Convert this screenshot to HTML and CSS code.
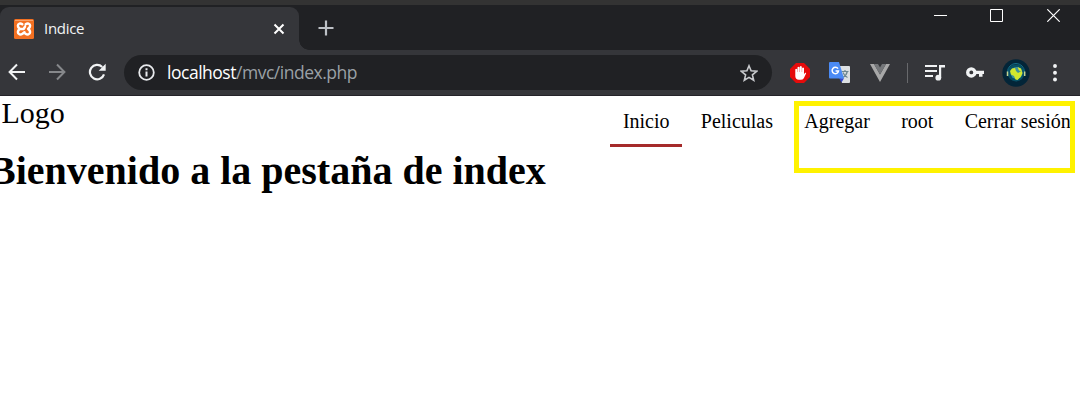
FILE: index.html
```html
<!DOCTYPE html>
<html lang="es">
<head>
<meta charset="utf-8">
<title>Indice</title>
<link rel="stylesheet" href="styles.css">
</head>
<body>
<header class="browser">
  <div class="tabstrip">
    <div class="tab">
      <svg class="favicon" width="20" height="20" viewBox="0 0 20 20"><rect width="20" height="20" rx="1.5" fill="#f37021"/><path d="M1 1.500h18" stroke="#f9a36b"/><path d="M8.300 5.300C6.500 4 3.900 4.300 3.900 6.800c0 1.700.8 2.400 2 3.100-1.200.8-2 1.600-2 3.200 0 2.700 2.800 2.900 4.600 1.600l2-1.500M11.700 5.300c1.800-1.300 4.400-1 4.400 1.500 0 1.700-.8 2.400-2 3.100 1.200.8 2 1.600 2 3.200 0 2.700-2.800 2.900-4.600 1.600M6.500 9.900h3.200l1.300-2.300" fill="none" stroke="#fff" stroke-width="2.500" stroke-linejoin="round" stroke-linecap="round"/></svg>
      <span class="tab-title">Indice</span>
      <svg class="tab-close" width="12" height="12" viewBox="0 0 12 12"><path d="m1.500 1.500 9 9m0-9-9 9" stroke="#fff" stroke-width="2"/></svg>
    </div>
    <svg class="new-tab" width="16" height="16" viewBox="0 0 16 16"><path d="M8 .5v15M.5 8h15" stroke="#bdc1c6" stroke-width="2.200"/></svg>
    <div class="window-buttons">
      <svg width="13" height="13" viewBox="0 0 13 13"><path d="M0 6.500h13" stroke="#fff"/></svg>
      <svg width="13" height="13" viewBox="0 0 13 13"><path d="M.5.500h12v12H.5z" fill="none" stroke="#fff"/></svg>
      <svg width="13" height="13" viewBox="0 0 13 13"><path d="m.3.300 12.400 12.400m0-12.400L.3 12.700" stroke="#fff" stroke-width="1.200"/></svg>
    </div>
  </div>
  <div class="toolbar">
    <div class="history">
      <svg width="18" height="18" viewBox="0 0 18 18"><path d="M17 9H2M9 1.500 1.600 9 9 16.500" fill="none" stroke="#f1f3f4" stroke-width="2"/></svg>
      <svg width="18" height="18" viewBox="0 0 18 18"><path d="M1 9h15M9 1.500 16.400 9 9 16.500" fill="none" stroke="#86888b" stroke-width="2"/></svg>
      <svg width="18" height="18" viewBox="0 0 18 18"><path d="M16 11.300A7.200 7.200 0 1 1 14.200 4" fill="none" stroke="#f1f3f4" stroke-width="2.200"/><path d="M17.700.7v7h-7z" fill="#f1f3f4"/></svg>
    </div>
    <div class="address">
      <svg width="17" height="17" viewBox="0 0 17 17"><circle cx="8.500" cy="8.500" r="7.300" fill="none" stroke="#e8eaed" stroke-width="1.800"/><path d="M8.500 7.500v5M8.500 4.300v2" stroke="#e8eaed" stroke-width="2"/></svg>
      <span class="url">localhost<span class="path">/mvc/index.php</span></span>
      <svg class="star" width="18" height="18" viewBox="0 0 18 18"><path d="m9 1.800 2.100 5 5.500.5-4.200 3.600 1.300 5.400L9 13.400l-4.700 2.900 1.300-5.400-4.200-3.600 5.500-.5z" fill="none" stroke="#c8cacd" stroke-width="1.600"/></svg>
    </div>
    <div class="extensions">
      <svg width="20" height="20" viewBox="0 0 20 20"><path d="M6 0h8l6 6v8l-6 6H6l-6-6V6z" fill="#e60b0b"/><path d="M5.300 11V6.300q.9-1.200 1.900 0V9h.3V4.300q.9-1.200 2 0V9h.3V3.700q1-1.200 2 0V9h.3V5q.9-1.200 1.900 0v6.200l1.100-1.400q1.200-.4 1 .7l-2.300 4.700q-1 1.600-3 1.600H9q-3.700-.3-3.700-3.800z" fill="#fff"/></svg>
      <svg class="translate" width="21" height="21" viewBox="0 0 21 21"><path d="M9 4h11q1 0 1 1v15q0 1-1 1h-7z" fill="#dce0e2"/><path d="M12.500 9.500h7M16 8v1.500M18.300 9.500c-.7 3-2.500 5-4.500 6M14 10.500c1 2.600 2.800 4.300 4.500 5" fill="none" stroke="#6d8791" stroke-width="1.200"/><path d="m10 16 5 .2-2.500 4.300z" fill="#3848c5"/><path d="M1 0h9l5 16.500H1q-1 0-1-1V1q0-1 1-1z" fill="#4b8bf5"/><path d="M9 6.700A3.200 3.200 0 1 0 9.500 9H6.600" fill="none" stroke="#fff" stroke-width="1.500"/></svg>
      <svg class="vue" width="20" height="18" viewBox="0 0 20 18"><path d="M0 0h4l6 10.500L16 0h4L10 18z" fill="#a8a8a8"/><path d="M4 0h4l2 3.500L12 0h4l-6 10.500z" fill="#747679"/></svg>
      <i class="divider"></i>
      <svg class="queue" width="20" height="16" viewBox="0 0 20 16"><path d="M0 1h12M0 6h12M0 11h8" stroke="#f1f3f4" stroke-width="2"/><path d="M14 0h6v2.400h-3.800V13H14z" fill="#f1f3f4"/><circle cx="13.300" cy="12.700" r="2.900" fill="#f1f3f4"/></svg>
      <svg class="key" width="18" height="11" viewBox="0 0 18 11"><circle cx="5.300" cy="5.400" r="3.600" fill="none" stroke="#f1f3f4" stroke-width="3.300"/><path d="M9.500 3.700H18V7h-1.500v2.800H13V7H9.500z" fill="#f1f3f4"/></svg>
      <svg class="avatar" width="28" height="28" viewBox="0 0 28 28"><circle cx="14" cy="14" r="13.700" fill="#032538"/><circle cx="14" cy="14" r="8.500" fill="#075065"/><circle cx="14.500" cy="14" r="6" fill="#3f929c"/><path d="m8 12 2-2.500 3-.5 1 3 2 2 3.500-2 1 2-1.500 3.500-3.500 3.500-2-.5-1.500-3.500-3-1.500zM15.500 8l3.500 1.500 1 3-3-1z" fill="#d3e82e"/><path d="M5.500 13a8.500 8.500 0 0 1 17 0" fill="none" stroke="#14708a"/><path d="M5.500 12.500v4.500M22.700 12.500v4.500" stroke="#c3d391" stroke-width="1.500"/></svg>
      <svg class="more" width="4" height="18" viewBox="0 0 4 18"><circle cx="2" cy="2" r="1.950" fill="#f1f3f4"/><circle cx="2" cy="8.800" r="1.950" fill="#f1f3f4"/><circle cx="2" cy="15.500" r="1.950" fill="#f1f3f4"/></svg>
    </div>
  </div>
</header>
<main class="page">
  <div class="page-header">
    <div class="logo">Logo</div>
    <nav class="menu">
      <a class="item active">Inicio</a>
      <a class="item">Peliculas</a>
      <a class="item">Agregar</a>
      <a class="item">root</a>
      <a class="item">Cerrar sesión</a>
    </nav>
  </div>
  <h1 class="welcome">Bienvenido a la pestaña de index</h1>
  <div class="highlight"></div>
</main>
</body>
</html>
```

FILE: styles.css
```css
* { box-sizing: border-box; }
body {
  margin: 0;
  height: 412px;
  overflow: hidden;
  background: #fff;
  color: #000;
}
svg { display: block; flex: none; }
.browser {
  height: 96px;
  border-top: 5px solid #333;
  border-bottom: 1px solid #242329;
  background: #35363a;
  font-family: "Open Sans", "Noto Sans", sans-serif;
}
.tabstrip {
  height: 45px;
  display: flex;
  background: #202124;
}
.tab {
  width: 299px;
  height: 43px;
  margin-top: 2px;
  padding: 0 14px;
  display: flex;
  align-items: center;
  background: #35363a;
  border-radius: 9px 9px 0 0;
  position: relative;
}
.tab::after {
  content: "";
  position: absolute;
  left: 100%;
  bottom: 0;
  width: 10px;
  height: 10px;
  background: radial-gradient(circle at 100% 0, #202124 9.5px, #35363a 10px);
}
.tab-title {
  margin: -2px 0 0 10px;
  color: #f1f3f4;
  font-size: 15px;
  letter-spacing: -0.3px;
}
.tab-close { margin-left: auto; }
.new-tab { margin: 15px 0 0 19px; }
.window-buttons {
  display: flex;
  gap: 43px;
  margin: 4px 20px 0 auto;
}
.window-buttons svg:last-child { margin-left: 1px; }
.toolbar {
  height: 45px;
  display: flex;
  align-items: center;
}
.history {
  width: 124px;
  margin-top: -1px;
  padding-left: 8px;
  display: flex;
  gap: 22px;
}
.address {
  width: 648px;
  height: 35px;
  padding: 0 14px;
  display: flex;
  align-items: center;
  border-radius: 18px;
  background: #202124;
}
.url {
  margin: -1px 0 0 12px;
  color: #fff;
  font-size: 17.5px;
  letter-spacing: -0.48px;
}
.path { color: #9aa0a6; }
.star { margin-left: auto; }
.extensions {
  padding-left: 18px;
  display: flex;
  align-items: center;
}
.translate { margin-left: 19px; }
.vue { margin-left: 20px; }
.divider {
  width: 1px;
  height: 20px;
  margin: 0 17px;
  background: #68696c;
}
.key { margin-left: 21px; }
.avatar { margin-left: 18px; }
.more { margin-left: 23px; }
.page {
  position: relative;
  font-family: "Liberation Serif", "Times New Roman", serif;
}
.page-header {
  height: 51px;
  padding: 0 8px 0 1.5px;
  display: flex;
  justify-content: space-between;
}
.logo {
  font-size: 30px;
  line-height: 34px;
}
.menu {
  display: flex;
  gap: 5.7px;
  margin-right: -11.5px;
  font-size: 20px;
}
.item {
  height: 51px;
  padding: 14px 12.8px 0;
  line-height: 23px;
  white-space: nowrap;
}
.active { border-bottom: 3px solid #a52a2a; }
.welcome {
  margin: 1px 0 0 -11px;
  font-size: 40px;
  line-height: 46px;
}
.highlight {
  position: absolute;
  left: 794px;
  top: 5px;
  width: 281px;
  height: 72px;
  border: 5px solid #fff200;
}
```
